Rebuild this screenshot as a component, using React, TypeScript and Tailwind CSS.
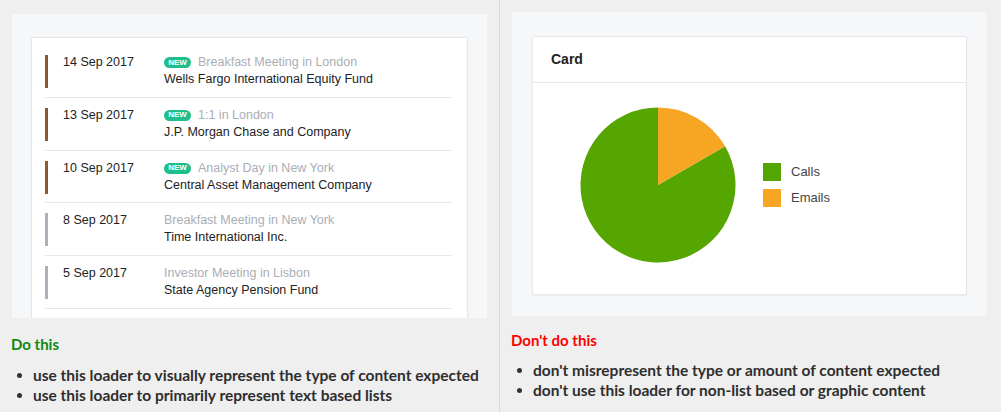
import React from "react";

const rows = [
  { date: "14 Sep 2017", isNew: true, title: "Breakfast Meeting in London", company: "Wells Fargo International Equity Fund" },
  { date: "13 Sep 2017", isNew: true, title: "1:1 in London", company: "J.P. Morgan Chase and Company" },
  { date: "10 Sep 2017", isNew: true, title: "Analyst Day in New York", company: "Central Asset Management Company" },
  { date: "8 Sep 2017", isNew: false, title: "Breakfast Meeting in New York", company: "Time International Inc." },
  { date: "5 Sep 2017", isNew: false, title: "Investor Meeting in Lisbon", company: "State Agency Pension Fund" },
];

function Bullet({ children }: { children: React.ReactNode }) {
  return (
    <li className="flex items-center h-[20px]">
      <span className="ml-[6px] w-[5px] h-[5px] rounded-full bg-[#333333]" />
      <span className="ml-[11px]">{children}</span>
    </li>
  );
}

export default function App() {
  return (
    <div className="w-[1001px] h-[412px] bg-[#efefef] flex overflow-hidden">
      {/* Left column */}
      <div className="w-[499px] h-full flex flex-col">
        <div className="mt-[14px] ml-[12px] w-[475px] h-[304px] bg-[#f6f7f9] overflow-hidden pt-[24px] pl-[20px]">
          <div
            className="w-[435px] bg-white shadow-[0_0_2px_rgba(0,0,0,0.22)] pt-[7px] pl-[13px] pr-[15px] pb-[20px]"
            style={{ fontFamily: '"Liberation Sans", Arial, sans-serif' }}
          >
            {rows.map((r) => (
              <div key={r.date} className="flex h-[52.75px] pt-[10px] border-b border-[#e6e8eb]">
                <div className={`w-[3px] h-[33px] ${r.isNew ? "bg-[#8f5a2b]" : "bg-[#aab2bc]"}`} />
                <div className="ml-[15px] w-[101px] text-[12.5px] leading-[17px] text-[#222222] -mt-[1px]">{r.date}</div>
                <div className="flex flex-col text-[12.5px] leading-[17px] -mt-[1px]">
                  <div className="flex items-center h-[17px]">
                    {r.isNew && (
                      <span className="mr-[7px] inline-flex items-center justify-center w-[27px] h-[11px] rounded-full bg-[#1ebf8c] text-white text-[8px] font-bold leading-none">
                        NEW
                      </span>
                    )}
                    <span className="text-[#a9aeb5]">{r.title}</span>
                  </div>
                  <div className="text-[#222222]">{r.company}</div>
                </div>
              </div>
            ))}
          </div>
        </div>
        <div
          className="pl-[11px] mt-[16px] text-[#2e2e2e]"
          style={{ fontFamily: 'Lato, "Liberation Sans", sans-serif' }}
        >
          <div className="h-[20px] leading-[20px] text-[15px] font-bold text-[#0f8a0f]">Do this</div>
          <ul className="mt-[11px] text-[15.5px] font-bold leading-[20px]">
            <Bullet>use this loader to visually represent the type of content expected</Bullet>
            <Bullet>use this loader to primarily represent text based lists</Bullet>
          </ul>
        </div>
      </div>

      {/* Divider */}
      <div className="w-px h-full bg-[#dadada]" />

      {/* Right column */}
      <div className="w-[501px] h-full flex flex-col">
        <div className="mt-[12px] ml-[12px] w-[475px] h-[304px] bg-[#f6f7f9] pt-[24px] pl-[20px]">
          <div
            className="w-[435px] h-[259px] bg-white border border-[#e6e8eb] rounded-[2px] shadow-[0_1px_2px_rgba(0,0,0,0.06)] flex flex-col"
            style={{ fontFamily: '"Liberation Sans", Arial, sans-serif' }}
          >
            <div className="h-[46px] border-b border-[#e6e8eb] flex items-center pl-[18px] text-[14px] font-bold text-[#222222]">
              Card
            </div>
            <div className="flex-1 flex items-center pl-[47px] pb-[8px]">
              <svg width="156" height="156" viewBox="0 0 156 156">
                <path d="M78,78 L145.12,39.25 A77.5,77.5 0 1 1 78,0.5 Z" fill="#55a600" />
                <path d="M78,78 L78,0.5 A77.5,77.5 0 0 1 145.12,39.25 Z" fill="#f6a623" />
              </svg>
              <div className="ml-[27px] flex flex-col gap-[8px] text-[13px] text-[#444444]">
                <div className="flex items-center h-[18px]">
                  <span className="w-[18px] h-[18px] bg-[#55a600]" />
                  <span className="ml-[10px]">Calls</span>
                </div>
                <div className="flex items-center h-[18px]">
                  <span className="w-[18px] h-[18px] bg-[#f6a623]" />
                  <span className="ml-[10px]">Emails</span>
                </div>
              </div>
            </div>
          </div>
        </div>
        <div
          className="pl-[11px] mt-[14px] text-[#2e2e2e]"
          style={{ fontFamily: 'Lato, "Liberation Sans", sans-serif' }}
        >
          <div className="h-[20px] leading-[20px] text-[15px] font-bold text-[#ff0000]">Don't do this</div>
          <ul className="mt-[10px] text-[15.5px] font-bold leading-[20px]">
            <Bullet>don't misrepresent the type or amount of content expected</Bullet>
            <Bullet>don't use this loader for non-list based or graphic content</Bullet>
          </ul>
        </div>
      </div>
    </div>
  );
}
